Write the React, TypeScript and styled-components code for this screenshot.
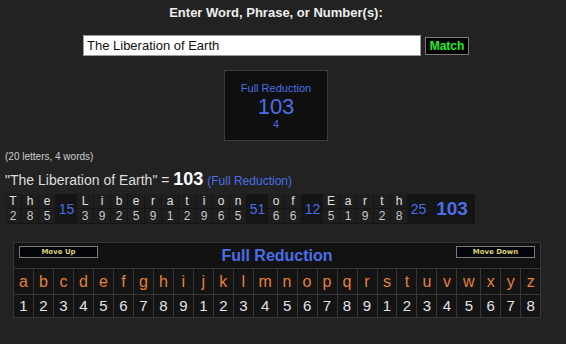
import styled, { createGlobalStyle } from "styled-components";

const GlobalStyle = createGlobalStyle`
  body {
    margin: 0;
    background: #222222;
    font-family: "Liberation Sans", Arial, sans-serif;
  }
`;

const BLUE = "#4a6ee8";

const Page = styled.div`
  width: 552px;
  padding-top: 5px;
`;

const Title = styled.div`
  text-align: center;
  font-size: 13px;
  font-weight: bold;
  line-height: 15px;
  color: #eeeeee;
`;

const InputRow = styled.div`
  display: flex;
  justify-content: center;
  align-items: center;
  gap: 4px;
  margin-top: 15px;
`;

const TextInput = styled.input`
  width: 338px;
  height: 21px;
  box-sizing: border-box;
  border: 1px solid #9a9a9a;
  background: #ffffff;
  color: #111111;
  font-family: "Liberation Sans", Arial, sans-serif;
  font-size: 13px;
  padding: 0 3px;
  outline: none;
`;

const MatchButton = styled.button`
  width: 44px;
  height: 18px;
  box-sizing: border-box;
  padding: 0;
  background: #000000;
  border: 1px solid #7a7a7a;
  color: #22ee22;
  font-family: "Liberation Sans", Arial, sans-serif;
  font-weight: bold;
  font-size: 12px;
  line-height: 16px;
`;

const ResultBox = styled.div`
  width: 104px;
  height: 71px;
  box-sizing: border-box;
  margin: 14px auto 0;
  background: #0f0f0f;
  border: 1px solid #3c3c3c;
  display: flex;
  flex-direction: column;
  align-items: center;
  padding-top: 11px;
  color: ${BLUE};
`;

const BoxLabel = styled.div`
  font-size: 11px;
  line-height: 13px;
`;

const BoxValue = styled.div`
  font-size: 22px;
  line-height: 24px;
`;

const BoxSub = styled.div`
  font-size: 10px;
  line-height: 12px;
`;

const Info = styled.div`
  margin-top: 10px;
  padding-left: 5px;
  font-size: 10px;
  line-height: 12px;
  color: #cccccc;
`;

const Equation = styled.div`
  margin-top: 6px;
  padding-left: 5px;
  font-size: 14px;
  line-height: 20px;
  color: #dddddd;
`;

const EqValue = styled.span`
  font-size: 18px;
  font-weight: bold;
  color: #ffffff;
`;

const EqCipher = styled.span`
  font-size: 12px;
  color: ${BLUE};
`;

const Breakdown = styled.div`
  display: flex;
  margin: 3px 0 0 5px;
  width: fit-content;
  background: #151515;
`;

const WordGroup = styled.div`
  display: flex;
`;

const LetterCol = styled.div`
  display: flex;
  flex-direction: column;
  width: 17px;
`;

const LetterCell = styled.div<{ $num?: boolean }>`
  height: 14px;
  margin: 0 1px 1px 0;
  background: #1e1e1e;
  text-align: center;
  font-size: 12px;
  line-height: 14px;
  color: ${(p) => (p.$num ? "#c8c8c8" : "#e0e0e0")};
`;

const SumCell = styled.div`
  width: 21px;
  display: flex;
  align-items: center;
  justify-content: center;
  font-size: 14px;
  color: ${BLUE};
`;

const TotalCell = styled.div`
  width: 46px;
  display: flex;
  align-items: center;
  justify-content: center;
  font-size: 19px;
  font-weight: bold;
  color: ${BLUE};
`;

const Chart = styled.div`
  width: 526px;
  margin: 18px 0 0 13px;
  border: 1px solid #363636;
  background: #141414;
`;

const ChartHeader = styled.div`
  height: 25px;
  display: flex;
  justify-content: space-between;
  align-items: center;
  padding: 0 5px;
  border-bottom: 1px solid #363636;
  background: #121212;
`;

const MoveButton = styled.button`
  width: 79px;
  height: 12px;
  box-sizing: border-box;
  align-self: flex-start;
  margin-top: 3px;
  padding: 0;
  background: #03030a;
  border: 1px solid #7a7a7a;
  color: #d9d27a;
  font-family: "DejaVu Sans", Verdana, sans-serif;
  font-weight: bold;
  font-size: 7px;
  line-height: 10px;
`;

const ChartTitle = styled.div`
  font-size: 16px;
  font-weight: bold;
  color: ${BLUE};
`;

const ChartBody = styled.div`
  display: flex;
`;

const ChartCol = styled.div<{ $wide?: boolean }>`
  flex: ${(p) => (p.$wide ? 1.2 : 1)} 1 0;
  display: flex;
  flex-direction: column;
  border-left: 1px solid #363636;
  &:first-child {
    border-left: none;
  }
`;

const ChartLetter = styled.div`
  height: 25px;
  border-bottom: 1px solid #363636;
  text-align: center;
  font-size: 16px;
  line-height: 25px;
  color: #e5803f;
`;

const ChartNumber = styled.div`
  height: 22px;
  text-align: center;
  font-size: 15px;
  line-height: 22px;
  color: #e2e2ea;
`;

const reduce = (ch: string) => {
  const n = ch.toLowerCase().charCodeAt(0) - 96;
  return ((n - 1) % 9) + 1;
};

const phrase = "The Liberation of Earth";
const words = phrase.split(" ");
const alphabet = "abcdefghijklmnopqrstuvwxyz".split("");

export default function App() {
  const sums = words.map((w) => w.split("").reduce((s, c) => s + reduce(c), 0));
  const total = sums.reduce((a, b) => a + b, 0);

  return (
    <>
      <GlobalStyle />
      <Page>
        <Title>Enter Word, Phrase, or Number(s):</Title>
        <InputRow>
          <TextInput defaultValue={phrase} />
          <MatchButton>Match</MatchButton>
        </InputRow>
        <ResultBox>
          <BoxLabel>Full Reduction</BoxLabel>
          <BoxValue>{total}</BoxValue>
          <BoxSub>4</BoxSub>
        </ResultBox>
      </Page>
      <Info>(20 letters, 4 words)</Info>
      <Equation>
        "{phrase}" = <EqValue>{total}</EqValue> <EqCipher>(Full Reduction)</EqCipher>
      </Equation>
      <Breakdown>
        {words.map((w, i) => (
          <WordGroup key={w}>
            {w.split("").map((c, j) => (
              <LetterCol key={j}>
                <LetterCell>{c}</LetterCell>
                <LetterCell $num>{reduce(c)}</LetterCell>
              </LetterCol>
            ))}
            <SumCell>{sums[i]}</SumCell>
          </WordGroup>
        ))}
        <TotalCell>{total}</TotalCell>
      </Breakdown>
      <Chart>
        <ChartHeader>
          <MoveButton>Move Up</MoveButton>
          <ChartTitle>Full Reduction</ChartTitle>
          <MoveButton>Move Down</MoveButton>
        </ChartHeader>
        <ChartBody>
          {alphabet.map((c) => (
            <ChartCol key={c} $wide={c === "m" || c === "w"}>
              <ChartLetter>{c}</ChartLetter>
              <ChartNumber>{reduce(c)}</ChartNumber>
            </ChartCol>
          ))}
        </ChartBody>
      </Chart>
    </>
  );
}
